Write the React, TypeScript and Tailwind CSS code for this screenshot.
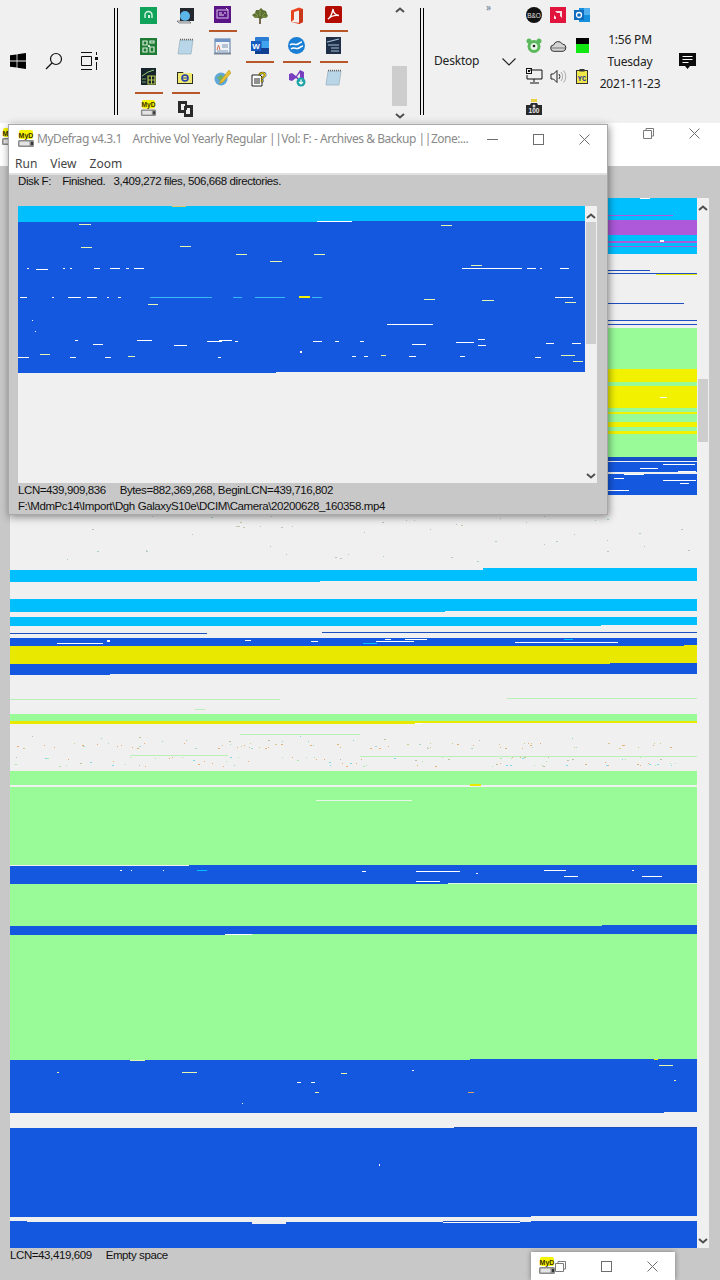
import React from "react";

const BLUE = "#1558e0";
const CYAN = "#00bfff";
const GREEN = "#98fb98";
const YELLOW = "#e8e800";
const BRIGHT = "#f2f200";
const PURPLE = "#ad59d9";
const EMPTY = "#f0f0f0";
const DARK = "#1d4fc0";
const PALE = "#e6f5b0";

// [x, y, w, h, colour] in page coordinates
type Box = [number, number, number, number, string];

const backBands: Box[] = [
  [10, 198, 687, 22, CYAN],
  [10, 220, 687, 15, PURPLE],
  [10, 235, 687, 19, CYAN],
  [608, 215, 65, 1, PURPLE],
  [608, 241, 89, 2, PURPLE],
  [608, 246, 89, 1, PURPLE],
  [10, 328, 687, 42, GREEN],
  [10, 369, 687, 13, BRIGHT],
  [10, 382, 687, 4, GREEN],
  [10, 386, 687, 22, BRIGHT],
  [10, 408, 687, 4, GREEN],
  [10, 412, 687, 2, BRIGHT],
  [10, 414, 687, 8, GREEN],
  [10, 422, 687, 5, BRIGHT],
  [10, 427, 687, 4, GREEN],
  [10, 431, 687, 3, BRIGHT],
  [10, 434, 687, 23, GREEN],
  [10, 457, 687, 4, "#1650c8"],
  [10, 462, 687, 10, BLUE],
  [10, 474, 687, 21, BLUE],
  [608, 270, 42, 1, DARK],
  [608, 273, 89, 1, DARK],
  [656, 274, 41, 1, YELLOW],
  [608, 303, 76, 1, DARK],
  [608, 320, 89, 1, DARK],
  [608, 324, 89, 1, DARK],
  [10, 570, 687, 11, CYAN],
  [10, 581, 310, 1, CYAN],
  [483, 568, 214, 2, CYAN],
  [10, 599, 687, 12, CYAN],
  [10, 611, 435, 1, CYAN],
  [10, 617, 687, 8, CYAN],
  [10, 625, 591, 1, CYAN],
  [10, 633, 197, 1, DARK],
  [322, 632, 375, 1, DARK],
  [10, 638, 687, 8, BLUE],
  [10, 646, 687, 17, YELLOW],
  [10, 663, 600, 1, YELLOW],
  [684, 645, 13, 1, YELLOW],
  [610, 663, 87, 1, BLUE],
  [10, 664, 687, 10, BLUE],
  [10, 674, 100, 1, BLUE],
  [10, 699, 270, 1, "#b8f0b8"],
  [507, 698, 190, 1, "#b8f0b8"],
  [195, 709, 10, 1, "#b8f0b8"],
  [10, 714, 687, 7, GREEN],
  [10, 721, 687, 2, YELLOW],
  [10, 723, 405, 1, YELLOW],
  [240, 734, 120, 1, "#b8f0b8"],
  [130, 755, 98, 1, "#b8f0b8"],
  [360, 756, 337, 1, "#b8f0b8"],
  [10, 771, 687, 14, GREEN],
  [10, 787, 687, 78, GREEN],
  [189, 865, 508, 1, BLUE],
  [10, 866, 687, 17, BLUE],
  [10, 883, 438, 1, BLUE],
  [448, 883, 249, 1, "#d8f8e0"],
  [10, 884, 687, 42, GREEN],
  [602, 925, 95, 1, BLUE],
  [10, 926, 687, 8, BLUE],
  [10, 934, 215, 1, BLUE],
  [10, 935, 687, 125, GREEN],
  [225, 934, 472, 1, GREEN],
  [470, 1059, 227, 1, BLUE],
  [10, 1060, 687, 52, BLUE],
  [10, 1112, 654, 1, BLUE],
  [454, 1127, 243, 1, DARK],
  [10, 1128, 687, 89, BLUE],
  [531, 1216, 166, 1, EMPTY],
  [10, 1222, 687, 26, BLUE],
  [10, 1221, 17, 1, BLUE],
  [531, 1221, 166, 1, BLUE],
  [252, 1222, 34, 2, EMPTY],
  [443, 1221, 77, 1, DARK],
  [443, 1222, 77, 1, "#ffffff"],
];

const backDashes: Box[] = [
  [515, 642, 103, 1, "#ffffff"],
  [57, 643, 46, 1, "#ffffff"],
  [107, 640, 3, 2, "#ffffff"],
  [245, 640, 6, 1, "#ffffff"],
  [311, 641, 7, 1, "#ffffff"],
  [363, 643, 14, 1, CYAN],
  [376, 641, 38, 1, "#ffffff"],
  [385, 639, 6, 1, "#ffffff"],
  [405, 639, 22, 1, "#ffffff"],
  [564, 639, 9, 1, CYAN],
  [415, 723, 8, 1, "#ffffff"],
  [470, 784, 11, 2, YELLOW],
  [316, 800, 96, 1, "#e8f5e8"],
  [120, 870, 2, 1, "#ffffff"],
  [131, 870, 1, 1, "#ffffff"],
  [163, 870, 1, 1, "#ffffff"],
  [197, 870, 10, 1, CYAN],
  [362, 871, 4, 1, "#ffffff"],
  [416, 871, 44, 1, "#ffffff"],
  [416, 881, 24, 1, "#ffffff"],
  [476, 873, 2, 1, "#ffffff"],
  [544, 870, 22, 1, "#ffffff"],
  [564, 876, 14, 1, "#ffffff"],
  [632, 870, 2, 1, "#ffffff"],
  [642, 876, 20, 1, "#ffffff"],
  [225, 934, 27, 1, "#ffffff"],
  [130, 1060, 15, 1, PALE],
  [182, 1072, 15, 1, PALE],
  [57, 1072, 2, 1, PALE],
  [341, 1073, 6, 1, PALE],
  [297, 1082, 4, 1, "#ffffff"],
  [311, 1082, 4, 1, "#ffffff"],
  [315, 1092, 4, 1, PALE],
  [412, 1070, 2, 1, "#ffffff"],
  [468, 1092, 6, 1, "#e0a060"],
  [242, 1103, 1, 1, "#ffffff"],
  [659, 1065, 14, 1, PALE],
  [654, 1059, 4, 1, YELLOW],
  [674, 1080, 2, 1, PALE],
  [379, 1164, 1, 2, "#ffffff"],
  [614, 478, 10, 1, "#ffffff"],
  [624, 474, 20, 1, "#ffffff"],
  [678, 471, 18, 1, "#ffffff"],
  [608, 490, 21, 1, "#ffffff"],
  [680, 483, 9, 1, "#ffffff"],
  [663, 480, 33, 1, "#ffffff"],
  [663, 464, 32, 1, "#ffffff"],
  [640, 468, 18, 1, "#ffffff"],
  [660, 397, 7, 1, "#ffffff"],
  [660, 240, 4, 2, "#ffffff"],
  [640, 198, 10, 1, "#ffffff"],
];

const frontDashes: Box[] = [
  [172, 206, 14, 1, "#d8c870"],
  [317, 221, 35, 1, "#ffffff"],
  [79, 224, 12, 1, PALE],
  [441, 225, 11, 1, PALE],
  [81, 247, 11, 1, PALE],
  [180, 246, 11, 1, PALE],
  [236, 254, 11, 1, PALE],
  [314, 254, 11, 1, PALE],
  [270, 261, 12, 1, PALE],
  [471, 265, 11, 1, PALE],
  [27, 268, 2, 1, "#ffffff"],
  [36, 269, 12, 1, "#ffffff"],
  [63, 268, 2, 1, "#ffffff"],
  [70, 268, 2, 1, "#ffffff"],
  [94, 268, 6, 1, "#ffffff"],
  [110, 268, 10, 1, "#ffffff"],
  [126, 268, 3, 1, "#ffffff"],
  [134, 268, 10, 1, "#ffffff"],
  [462, 268, 60, 1, "#ffffff"],
  [527, 268, 9, 1, "#ffffff"],
  [540, 268, 2, 1, "#ffffff"],
  [560, 268, 9, 1, "#ffffff"],
  [20, 297, 7, 1, "#ffffff"],
  [52, 297, 2, 1, "#ffffff"],
  [68, 297, 13, 1, "#ffffff"],
  [87, 297, 10, 1, "#ffffff"],
  [107, 297, 2, 1, "#ffffff"],
  [118, 297, 3, 1, "#ffffff"],
  [150, 297, 62, 1, "#38b8f8"],
  [233, 297, 9, 1, "#38b8f8"],
  [255, 297, 30, 1, "#38b8f8"],
  [299, 296, 11, 2, BRIGHT],
  [312, 297, 10, 1, "#38b8f8"],
  [148, 304, 10, 1, PALE],
  [424, 299, 11, 1, PALE],
  [482, 300, 12, 1, PALE],
  [555, 297, 18, 1, "#ffffff"],
  [565, 302, 11, 1, PALE],
  [32, 320, 1, 1, "#ffffff"],
  [387, 324, 46, 1, "#ffffff"],
  [35, 331, 1, 1, "#ffffff"],
  [75, 340, 3, 1, "#ffffff"],
  [137, 340, 15, 1, "#ffffff"],
  [93, 344, 10, 1, "#ffffff"],
  [174, 345, 13, 1, "#ffffff"],
  [207, 341, 15, 1, "#ffffff"],
  [219, 340, 13, 1, "#ffffff"],
  [235, 341, 3, 1, "#ffffff"],
  [313, 341, 9, 1, "#ffffff"],
  [335, 341, 4, 1, "#ffffff"],
  [360, 341, 4, 1, "#ffffff"],
  [412, 344, 14, 1, "#ffffff"],
  [456, 342, 18, 1, "#ffffff"],
  [478, 339, 7, 1, "#ffffff"],
  [478, 345, 8, 1, "#ffffff"],
  [546, 343, 8, 1, "#ffffff"],
  [572, 343, 9, 1, "#ffffff"],
  [16, 357, 13, 1, "#ffffff"],
  [40, 354, 10, 1, PALE],
  [70, 357, 6, 1, "#ffffff"],
  [128, 356, 7, 1, PALE],
  [105, 357, 6, 1, "#ffffff"],
  [218, 357, 3, 1, "#ffffff"],
  [352, 356, 4, 1, "#ffffff"],
  [364, 356, 4, 1, "#ffffff"],
  [381, 355, 5, 1, PALE],
  [409, 356, 7, 1, "#ffffff"],
  [460, 356, 5, 1, "#ffffff"],
  [535, 357, 6, 1, "#ffffff"],
  [561, 355, 14, 1, PALE],
  [573, 361, 10, 1, PALE],
  [300, 351, 2, 2, "#ffffff"],
];

// scatter of single fragments in the almost empty zones
function speckle(seed: number, count: number, y0: number, y1: number, colours: string[]) {
  const out: Box[] = [];
  let s = seed;
  const next = () => {
    s = (s * 1103515245 + 12345) & 0x7fffffff;
    return s >> 8;
  };
  for (let i = 0; i < count; i++) {
    const x = 12 + (next() % 680);
    const y = y0 + (next() % (y1 - y0));
    out.push([x, y, 1 + (next() % 2), 1, colours[next() % colours.length]]);
  }
  return out;
}

const specks = [
  ...speckle(7, 46, 516, 562, ["#b8c8b8", "#a8d0c8", "#c8c8a8"]),
  ...speckle(11, 70, 743, 749, ["#e8b070", "#e8b070", "#d8c890", "#a8d8d0"]),
  ...speckle(23, 90, 757, 767, ["#e8b070", "#80d8e8", "#a8e8a8", "#c0c0a0"]),
  ...speckle(31, 14, 736, 742, ["#80d8e8", "#c0c0a0"]),
];

const DiskMap = ({ x, y, w, h, boxes }: { x: number; y: number; w: number; h: number; boxes: Box[] }) => (
  <svg
    width={w}
    height={h}
    viewBox={`${x} ${y} ${w} ${h}`}
    shapeRendering="crispEdges"
    className="block shrink-0 bg-[#f0f0f0]"
  >
    {boxes.map((b, i) => (
      <rect key={i} x={b[0]} y={b[1]} width={b[2]} height={b[3]} fill={b[4]} />
    ))}
  </svg>
);

const ScrollBar = ({ thumbTop, thumbHeight, h, width }: { thumbTop: number; thumbHeight: number; h: number; width: string }) => (
  <div className={`${width} shrink-0 bg-[#f0f0f0] flex flex-col items-center relative`} style={{ height: h }}>
    <svg width="10" height="6" viewBox="0 0 10 6" className="mt-[7px]">
      <path d="M1 5 5 1.500 9 5" fill="none" stroke="#505050" strokeWidth="2" />
    </svg>
    <div className="absolute inset-x-[1px] bg-[#cdcdcd]" style={{ top: thumbTop, height: thumbHeight }} />
    <svg width="10" height="6" viewBox="0 0 10 6" className="mt-auto mb-[4px]">
      <path d="M1 1 5 4.500 9 1" fill="none" stroke="#505050" strokeWidth="2" />
    </svg>
  </div>
);

const DoubleRule = () => (
  <div className="flex gap-[2px] shrink-0 h-[107px] mt-[8px]">
    <div className="w-[1px] bg-black" />
    <div className="w-[1px] bg-black" />
  </div>
);

const MyD = ({ size = 18 }: { size?: number }) => (
  <svg width={size} height={size} viewBox="0 0 18 18" className="shrink-0">
    <rect x="2" y="0" width="14" height="9" rx="2" fill="#f4f400" />
    <text x="9" y="7.500" textAnchor="middle" fontSize="7" fontWeight="700" fontFamily="Liberation Sans, sans-serif" fill="#3a2c00">
      MyD
    </text>
    <rect x="1" y="10" width="16" height="7" rx="1.500" fill="#8a8a8a" />
    <rect x="2.500" y="11.500" width="10" height="4" fill="#e4e4e4" />
    <rect x="14" y="12" width="2" height="3" fill="#333" />
  </svg>
);

const Notepad = () => (
  <svg width="17" height="17" viewBox="0 0 17 17">
    <path d="M3 2h13l-2 14H1z" fill="#b9d6e8" stroke="#8ba4b4" strokeWidth=".6" />
    <path d="M3 1.500h13" stroke="#666" strokeWidth="1.400" strokeDasharray="1 1" />
  </svg>
);

const launchIcons: { node: React.ReactNode; active?: boolean }[] = [
  {
    node: (
      <svg width="17" height="17" viewBox="0 0 17 17">
        <rect width="17" height="17" fill="#11a35a" />
        <path d="M5 11V8a3.500 3.500 0 0 1 7 0v3" fill="none" stroke="#d8f2e4" strokeWidth="1.400" />
        <rect x="8" y="8" width="2" height="3" fill="#d8f2e4" />
      </svg>
    ),
  },
  {
    node: (
      <svg width="18" height="17" viewBox="0 0 18 17">
        <rect x="3" y="1" width="14" height="13" fill="#23272e" />
        <circle cx="8" cy="9" r="5" fill="#5bb5e8" />
        <path d="M0 14h12l2 2H2z" fill="#d8dde2" stroke="#333" strokeWidth=".5" />
      </svg>
    ),
  },
  {
    node: (
      <svg width="17" height="17" viewBox="0 0 17 17">
        <rect width="17" height="17" fill="#5b1488" />
        <rect x="3" y="4" width="11" height="8" fill="none" stroke="#d9c2ea" strokeWidth="1" />
        <path d="M5 7h3M5 9h5M10 7h2" stroke="#e8d8f2" strokeWidth="1" />
        <path d="M12 2l2 2" stroke="#e8d8f2" strokeWidth="1" />
      </svg>
    ),
    active: true,
  },
  {
    node: (
      <svg width="18" height="17" viewBox="0 0 18 17">
        <path d="M9 11v6" stroke="#5a4a2a" strokeWidth="1.600" />
        <path d="M1 8l3-2 1-3 3 0 2-2 2 2 3 1 1 3 1 2-2 2-3 0-2 1-3-1-3 0z" fill="#5d7033" />
        <path d="M4 6l3 3M9 3v6M14 6l-3 3M3 10h4M11 10h4" stroke="#93a65c" strokeWidth=".8" />
      </svg>
    ),
  },
  {
    node: (
      <svg width="14" height="17" viewBox="0 0 14 17">
        <path d="M1 3.500 9 .5 13 2v13l-4 2-8-2 8 .8V3.500L4 5v7.500l-3 2.500z" fill="#e8431f" />
        <path d="M9 3.500 13 2v13l-4 2z" fill="#c9381a" />
      </svg>
    ),
  },
  {
    node: (
      <svg width="17" height="17" viewBox="0 0 17 17">
        <rect width="17" height="17" rx="1.500" fill="#b30b00" />
        <path d="M3 13c2-1 4-5 5-10 .2 3 2 6 6 6.500-4-.5-8 .5-11 3.500z" fill="none" stroke="#fff" strokeWidth="1.300" />
      </svg>
    ),
    active: true,
  },
  {
    node: (
      <svg width="17" height="17" viewBox="0 0 17 17">
        <rect width="17" height="17" fill="#1f7a33" />
        <path d="M3 3h4v4H3zM10 3h4v2h-4zM3 10h4v4H3zM10 9h4v5h-4z" fill="none" stroke="#d6ecd9" strokeWidth="1.200" />
        <path d="M8 7h2v2H8z" fill="#d6ecd9" />
      </svg>
    ),
  },
  { node: <Notepad /> },
  {
    node: (
      <svg width="17" height="17" viewBox="0 0 17 17">
        <rect x="1" y="1" width="15" height="14" fill="#f0f4fa" stroke="#5878a0" />
        <rect x="1" y="1" width="15" height="3" fill="#7094c4" />
        <path d="M3 12l1.500-5 1.500 5" fill="none" stroke="#d87048" />
        <path d="M8 7h6M8 9h6M3 13h11" stroke="#7894b0" />
        <rect x="0" y="15" width="17" height="1.500" fill="#7a8694" />
      </svg>
    ),
  },
  {
    node: (
      <svg width="18" height="17" viewBox="0 0 18 17">
        <rect x="4" y="0" width="14" height="17" rx="1" fill="#2b7cd3" />
        <rect x="4" y="11" width="14" height="6" fill="#103f91" />
        <rect x="11" y="4" width="7" height="7" fill="#41a5ee" />
        <rect x="0" y="4" width="10" height="10" fill="#185abd" />
        <text x="5" y="12" textAnchor="middle" fontSize="8" fontWeight="700" fontFamily="Liberation Sans, sans-serif" fill="#fff">
          W
        </text>
      </svg>
    ),
    active: true,
  },
  {
    node: (
      <svg width="17" height="17" viewBox="0 0 17 17">
        <circle cx="8.500" cy="8.500" r="8.500" fill="#1a7fd4" />
        <path d="M2 8c3-3 5 1 8-1s3-2 4-2M3 12c3-3 5 1 8-1s3-2 4-2" fill="none" stroke="#fff" strokeWidth="1.600" />
      </svg>
    ),
    active: true,
  },
  {
    node: (
      <svg width="15" height="17" viewBox="0 0 15 17">
        <rect width="15" height="17" fill="#1f2f48" />
        <path d="M1 5l12-3M2 8h11M5 11h8M5 14h8" stroke="#a8c4dc" strokeWidth="1.200" />
      </svg>
    ),
    active: true,
  },
  {
    node: (
      <svg width="15" height="17" viewBox="0 0 15 17">
        <rect width="15" height="17" fill="#18242c" />
        <path d="M1 8l6-4 6-2" fill="none" stroke="#90c878" strokeWidth="1" />
        <path d="M7 8h7v8H7z" fill="none" stroke="#b8c850" strokeWidth="1.200" />
        <path d="M10.500 8v8M7 12h7" stroke="#b8c850" />
        <path d="M1 11h4M1 14h4" stroke="#70a060" />
      </svg>
    ),
    active: true,
  },
  {
    node: (
      <svg width="17" height="17" viewBox="0 0 17 17">
        <path d="M0 4h6l1 2h9v10H0z" fill="#2c2c20" />
        <rect x="1" y="5" width="14" height="10" fill="#eeea70" />
        <circle cx="8" cy="10" r="3" fill="none" stroke="#2038b0" strokeWidth="1.500" />
        <path d="M6 10h4" stroke="#2038b0" />
      </svg>
    ),
    active: true,
  },
  {
    node: (
      <svg width="17" height="17" viewBox="0 0 17 17">
        <circle cx="7" cy="10" r="6.500" fill="#5fa8d8" />
        <path d="M3 8c2 0 3-2 5-2l1 3-3 3z" fill="#6fb060" />
        <path d="M15 1L7 11l-2 4 4-2 8-9z" fill="#e8c030" stroke="#a88820" strokeWidth=".5" />
      </svg>
    ),
  },
  {
    node: (
      <svg width="17" height="18" viewBox="0 0 17 18">
        <path d="M1 6h8l2 2v9H1z" fill="#fff" stroke="#222" />
        <path d="M3 10h6M3 12h6M3 14h6" stroke="#222" />
        <text x="11.500" y="13" textAnchor="middle" fontSize="14" fontWeight="700" fontFamily="Liberation Sans, sans-serif" fill="#f8e000" stroke="#222" strokeWidth=".5">
          ?
        </text>
      </svg>
    ),
  },
  {
    node: (
      <svg width="18" height="18" viewBox="0 0 18 18">
        <path d="M1 5l3-1 4 3 4-6 4 2v9l-3 1-5-4-4 3-3-1z" fill="#7a3fc0" />
        <path d="M12 4v7l-3-3.500z" fill="#f0f0f0" />
        <circle cx="13" cy="13" r="4.500" fill="#1fa5a8" />
        <path d="M13 10.500v4M11 13l2 2 2-2" fill="none" stroke="#fff" strokeWidth="1.200" />
      </svg>
    ),
  },
  { node: <Notepad /> },
  { node: <MyD size={17} /> },
  {
    node: (
      <svg width="15" height="16" viewBox="0 0 15 16">
        <path fillRule="evenodd" d="M0 0h9v4h6v12H6v-4H0zM3 3v6h3V5h1V3zM9 7v2H8v4h4V7z" fill="#2b2b2b" />
      </svg>
    ),
  },
];

const trayIcons: React.ReactNode[] = [
  <svg key="bo" width="16" height="16" viewBox="0 0 16 16">
    <circle cx="8" cy="8" r="8" fill="#111" />
    <text x="8" y="10.500" textAnchor="middle" fontSize="6.500" fontFamily="Liberation Sans, sans-serif" fill="#e0e0e0">
      B&O
    </text>
  </svg>,
  <svg key="amd" width="16" height="16" viewBox="0 0 16 16">
    <rect width="16" height="16" fill="#e0143c" />
    <path d="M5 4h7v7l-2-2V6H7zM4 12V8l2 2v2z" fill="#f8e0e4" />
  </svg>,
  <svg key="outlook" width="16" height="16" viewBox="0 0 16 16">
    <rect x="5" y="1" width="11" height="14" fill="#1490df" />
    <rect x="10" y="1" width="6" height="7" fill="#50b0ee" />
    <rect x="0" y="3" width="10" height="10" fill="#0f6cbd" />
    <circle cx="5" cy="8" r="2.500" fill="none" stroke="#fff" strokeWidth="1.300" />
  </svg>,
  <svg key="bear" width="16" height="15" viewBox="0 0 16 15">
    <circle cx="3" cy="3" r="2.500" fill="#5cb85c" />
    <circle cx="13" cy="3" r="2.500" fill="#5cb85c" />
    <circle cx="8" cy="8.500" r="6.500" fill="#5cb85c" />
    <circle cx="8" cy="8.500" r="3.500" fill="#e8f8e8" />
    <circle cx="8" cy="8" r="1.300" fill="#222" />
  </svg>,
  <svg key="cloud" width="17" height="12" viewBox="0 0 17 12">
    <path d="M4 11.300a3.200 3.200 0 0 1-.3-6.400A4.700 4.700 0 0 1 12.300 4a3.700 3.700 0 0 1 .7 7.300z" fill="#d4d4d4" stroke="#333" />
    <path d="M1 8h15" stroke="#333" strokeWidth=".6" />
  </svg>,
  <svg key="meter" width="13" height="15" viewBox="0 0 13 15">
    <rect width="13" height="6" fill="#000" />
    <rect y="6" width="13" height="9" fill="#11e811" />
  </svg>,
  <svg key="net" width="17" height="16" viewBox="0 0 17 16">
    <path d="M4 2h12v9H1V7" fill="none" stroke="#111" />
    <rect x=".5" y=".5" width="5" height="5" fill="none" stroke="#111" />
    <rect x="2" y="2" width="2" height="2" fill="#111" />
    <path d="M8 11v3M4 15h9" stroke="#111" />
  </svg>,
  <svg key="speaker" width="17" height="15" viewBox="0 0 17 15">
    <path d="M1 5h2.500L7 1.500v12L3.500 10H1z" fill="none" stroke="#222" />
    <path d="M9 5a4 4 0 0 1 0 5" fill="none" stroke="#333" />
    <path d="M11 3a7 7 0 0 1 0 9M13.500 1.500a9 9 0 0 1 0 12" fill="none" stroke="#aaa" />
  </svg>,
  <svg key="clip" width="12" height="15" viewBox="0 0 12 15">
    <rect x=".5" y="1.500" width="11" height="13" fill="#f0e848" stroke="#333" />
    <rect x="3.500" y="0" width="5" height="2.500" fill="#333" />
    <text x="6" y="12" textAnchor="middle" fontSize="7" fontWeight="700" fontFamily="Liberation Mono, monospace" fill="#1830a0">
      YC
    </text>
  </svg>,
  <svg key="cam" width="16" height="16" viewBox="0 0 16 16">
    <rect x="5" y="0" width="6" height="3" fill="#e8d040" />
    <path d="M0 6h4l1-2h6l1 2h4v10H0z" fill="#2a2a2a" />
    <text x="8" y="14" textAnchor="middle" fontSize="6.500" fontWeight="700" fontFamily="Liberation Sans, sans-serif" fill="#eee">
      100
    </text>
    <circle cx="8" cy="7" r="1.500" fill="#ddd" />
  </svg>,
];

const RestoreIcon = () => (
  <svg width="11" height="11" viewBox="0 0 11 11" className="shrink-0">
    <path d="M3 2.500V.5h7.500V8H8.500M.5 2.500h8v8h-8z" fill="none" stroke="#7a7a7a" />
  </svg>
);
const MaxIcon = () => (
  <svg width="11" height="11" viewBox="0 0 11 11" className="shrink-0">
    <rect x=".5" y=".5" width="10" height="10" fill="none" stroke="#6e6e6e" />
  </svg>
);
const CloseIcon = () => (
  <svg width="11" height="11" viewBox="0 0 11 11" className="shrink-0">
    <path d="M.5.500l10 10M10.500.500l-10 10" fill="none" stroke="#6e6e6e" />
  </svg>
);

const Taskbar = () => (
  <div className="flex h-[123px] bg-[#f0f0f0] relative">
    <div className="w-[114px] shrink-0 flex items-center pl-[10px] pb-[2px]">
      <svg width="16" height="16" viewBox="0 0 16 16">
        <path d="M0 2.300 6.600 1.400V7.600H0zM7.400 1.300 16 0V7.600H7.400zM0 8.400H6.600V14.600L0 13.700zM7.400 8.400H16V16L7.400 14.700z" fill="#000" />
      </svg>
      <svg width="18" height="18" viewBox="0 0 18 18" className="ml-[19px]">
        <circle cx="11" cy="7" r="5.500" fill="none" stroke="#111" strokeWidth="1.200" />
        <path d="M7 11 1 17" stroke="#111" strokeWidth="1.300" />
      </svg>
      <svg width="18" height="18" viewBox="0 0 18 18" className="ml-[18px]">
        <path d="M0 .5h11M0 17.500h11M.5 4.500h10v9H.5z" fill="none" stroke="#111" />
        <rect x="14" y="5" width="3" height="3" fill="#111" />
        <path d="M15.500 0v3M15.500 10v8" stroke="#111" />
      </svg>
    </div>
    <DoubleRule />
    <div className="w-[273px] shrink-0 pl-[12px]">
      <div className="grid grid-cols-[repeat(6,37px)] auto-rows-[31px] pt-[1px]">
        {launchIcons.map((icon, i) => (
          <div key={i} className="flex justify-center">
            <div
              className={`w-[28px] h-[31px] flex items-center justify-center pb-[2px] ${
                icon.active ? "border-b-[2px] border-[#b8582a]" : ""
              }`}
            >
              {icon.node}
            </div>
          </div>
        ))}
      </div>
    </div>
    <ScrollBar width="w-[17px]" h={123} thumbTop={66} thumbHeight={40} />
    <div className="w-[12px] shrink-0" />
    <DoubleRule />
    <div className="w-[98px] shrink-0 relative flex items-center pl-[10px] pb-[2px] text-[12px] tracking-[-0.2px] text-[#222] font-['Noto_Sans',sans-serif]">
      <span>Desktop</span>
      <svg width="14" height="8" viewBox="0 0 14 8" className="ml-auto mr-[6px] mt-[2px]">
        <path d="M.5.500 7 7l6.500-6.500" fill="none" stroke="#222" strokeWidth="1.100" />
      </svg>
      <span className="absolute left-[62px] top-0 text-[10px] text-[#6a7a9a] leading-[14px]">»</span>
    </div>
    <div className="grid grid-cols-[repeat(3,24px)] auto-rows-[30.5px] w-[72px] shrink-0">
      {trayIcons.map((icon, i) => (
        <div key={i} className="flex items-center justify-center">
          {icon}
        </div>
      ))}
    </div>
    <div className="w-[72px] shrink-0 flex flex-col items-center pt-[29px] text-[12px] tracking-[-0.2px] leading-[22px] text-[#222] font-['Noto_Sans',sans-serif]">
      <span>1:56 PM</span>
      <span>Tuesday</span>
      <span>2021-11-23</span>
    </div>
    <div className="flex-1 flex justify-start pl-[13px] pt-[53px]">
      <svg width="17" height="17" viewBox="0 0 17 17">
        <path d="M0 0h17v13h-6l-2.500 3L6 13H0z" fill="#0c0c0c" />
        <path d="M3.500 3.500h10M3.500 6.500h10M3.500 9.500h6" stroke="#fff" />
      </svg>
    </div>
  </div>
);

const BackWindow = () => (
  <div className="flex-1 flex flex-col">
    <div className="h-[43px] bg-white flex items-start gap-[35px] pt-[5px] pl-[1px] pr-[20px] shrink-0">
      <div className="mr-auto">
        <MyD />
      </div>
      <RestoreIcon />
      <CloseIcon />
    </div>
    <div className="flex pl-[10px] pt-[32px]">
      <DiskMap x={10} y={198} w={687} h={1050} boxes={[...backBands, ...specks, ...backDashes]} />
      <ScrollBar width="w-[12px]" h={1050} thumbTop={181} thumbHeight={63} />
    </div>
    <div className="pl-[10px] text-[11.5px] leading-[14px] text-[#111] whitespace-pre tracking-[-0.4px] font-['Liberation_Sans',sans-serif]">
      LCN=43,419,609     Empty space
    </div>
  </div>
);

const FrontWindow = () => (
  <div className="absolute left-[8px] top-[124px] w-[600px] h-[391px] border border-[#a8a8a8] bg-[#c8c8c8] shadow-[1px_2px_8px_rgba(0,0,0,0.45)] flex flex-col">
    <div className="h-[48px] bg-white shrink-0">
      <div className="h-[28px] flex items-center pl-[8px] text-[12px] text-[#8a8a8a] font-['Noto_Sans',sans-serif]">
        <MyD />
        <span className="ml-[2px] whitespace-pre tracking-[-0.46px]">
          MyDefrag v4.3.1    Archive Vol Yearly Regular ||Vol: F: - Archives &amp; Backup ||Zone:...
        </span>
        <div className="ml-auto flex items-center gap-[35px] pr-[17px]">
          <svg width="11" height="11" viewBox="0 0 11 11" className="shrink-0">
            <path d="M0 5.500h11" stroke="#6e6e6e" />
          </svg>
          <MaxIcon />
          <CloseIcon />
        </div>
      </div>
      <div className="flex gap-[13px] pl-[6px] pt-[3px] text-[12px] leading-[16px] text-[#444] font-['Noto_Sans',sans-serif]">
        <span>Run</span>
        <span>View</span>
        <span>Zoom</span>
      </div>
    </div>
    <div className="h-[2px] bg-[#e0e0e0] shrink-0" />
    <div className="pl-[9px] h-[31px] text-[11.5px] leading-[12px] text-[#111] whitespace-pre tracking-[-0.4px] font-['Liberation_Sans',sans-serif] shrink-0">
      Disk F:    Finished.   3,409,272 files, 506,668 directories.
    </div>
    <div className="flex pl-[9px] shrink-0">
      <DiskMap
        x={18}
        y={206}
        w={567}
        h={277}
        boxes={[
          [18, 206, 567, 16, CYAN],
          [18, 222, 567, 150, BLUE],
          [18, 372, 258, 1, BLUE],
          [352, 221, 233, 1, BLUE],
          ...frontDashes,
        ]}
      />
      <ScrollBar width="w-[12px]" h={277} thumbTop={16} thumbHeight={122} />
    </div>
    <div className="pl-[9px] -mt-[1px] text-[11.5px] leading-[16px] text-[#111] whitespace-pre tracking-[-0.4px] font-['Liberation_Sans',sans-serif]">
      <div>LCN=439,909,836     Bytes=882,369,268, BeginLCN=439,716,802</div>
      <div>F:\MdmPc14\Import\Dgh GalaxyS10e\DCIM\Camera\20200628_160358.mp4</div>
    </div>
  </div>
);

const App = () => {
  return (
    <div className="relative w-[720px] h-[1280px] overflow-hidden bg-[#c8c8c8] flex flex-col">
      <Taskbar />
      <BackWindow />
      <FrontWindow />
      {/* minimised copy of the window, bottom right */}
      <div className="absolute left-[531px] top-[1252px] w-[144px] h-[28px] bg-white shadow-[0_0_5px_rgba(0,0,0,0.4)] flex items-center pl-[7px]">
        <MyD />
        <div className="-ml-[1px]">
          <RestoreIcon />
        </div>
        <div className="ml-[35px]">
          <MaxIcon />
        </div>
        <div className="ml-[35px]">
          <CloseIcon />
        </div>
      </div>
    </div>
  );
};

export default App;
